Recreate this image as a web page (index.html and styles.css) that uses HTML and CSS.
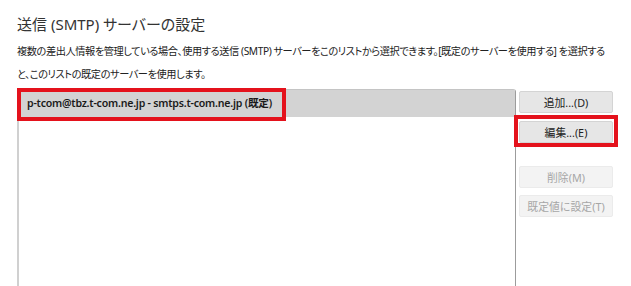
FILE: index.html
```html
<!DOCTYPE html>
<html lang="ja">
<head>
  <meta charset="UTF-8">
  <title>送信 (SMTP) サーバーの設定</title>
  <link rel="stylesheet" href="styles.css">
</head>
<body>
  <div class="page">
    <h1 class="title">送信 (SMTP) サーバーの設定</h1>
    <p class="desc">複数の差出人情報を管理している場合、使用する送信 (SMTP) サーバーをこのリストから選択できます。[既定のサーバーを使用する] を選択する<br>と、このリストの既定のサーバーを使用します。</p>

    <div class="panel">
      <div class="list">
        <div class="row selected">p-tcom@tbz.t-com.ne.jp - smtps.t-com.ne.jp (既定)</div>
        <div class="mark mark-row"></div>
      </div>

      <div class="actions">
        <button class="btn">追加...(D)</button>
        <div class="btn-wrap">
          <button class="btn">編集...(E)</button>
          <div class="mark mark-btn"></div>
        </div>
        <button class="btn btn-gap" disabled>削除(M)</button>
        <button class="btn" disabled>既定値に設定(T)</button>
      </div>
    </div>
  </div>
</body>
</html>
```

FILE: styles.css
```css
body {
  margin: 0;
  background: #fff;
  color: #1e1e1e;
  font-family: "Noto Sans", "Noto Sans CJK JP", sans-serif;
  overflow: hidden;
}

.page {
  padding: 14px 0 0 17px;
}

.title {
  margin: 0;
  font-size: 15px;
  font-weight: 400;
  line-height: 20px;
  color: #333;
  font-feature-settings: "palt";
}

.desc {
  margin: 6px 0 0;
  font-size: 10.2px;
  line-height: 23px;
  letter-spacing: -0.42px;
  color: #222;
  white-space: nowrap;
  font-feature-settings: "palt";
}

.panel {
  display: flex;
  align-items: flex-start;
  margin-top: 3px;
}

.list {
  position: relative;
  width: 499px;
  height: 197px;
  box-sizing: border-box;
  border-left: 2px solid #d0d0d0;
  border-right: 1px solid #9c9c9c;
  border-top: 1px solid #c4c4c4;
  border-top-right-radius: 3px;
}

.row {
  height: 27px;
  line-height: 27px;
  padding-left: 8px;
  font-size: 10.6px;
  font-weight: 600;
  letter-spacing: -0.22px;
  color: #1a1a1a;
}

.row.selected {
  background: #d3d3d3;
}

/* red annotation frames */
.mark {
  position: absolute;
  border: 4px solid #e4121c;
  box-sizing: border-box;
}

.mark-row {
  left: -2px;
  top: -2px;
  width: 269px;
  height: 33px;
}

.actions {
  display: flex;
  flex-direction: column;
  gap: 7px;
  margin-left: 3px;
  padding-top: 2px;
  width: 94px;
}

.btn {
  height: 22px;
  width: 94px;
  padding: 0;
  background: #e6e6e6;
  border: 1px solid #d4d4d4;
  border-radius: 2px;
  font-family: "Noto Sans", "Noto Sans CJK JP", sans-serif;
  font-size: 10.8px;
  color: #222;
}

.btn:disabled {
  background: #f3f3f3;
  border-color: #ebebeb;
  color: #a6a6a6;
}

.btn-wrap {
  position: relative;
  height: 22px;
}

.mark-btn {
  left: -5px;
  top: -5px;
  right: -5px;
  bottom: -5px;
}

.btn-gap {
  margin-top: 17px;
}
```
